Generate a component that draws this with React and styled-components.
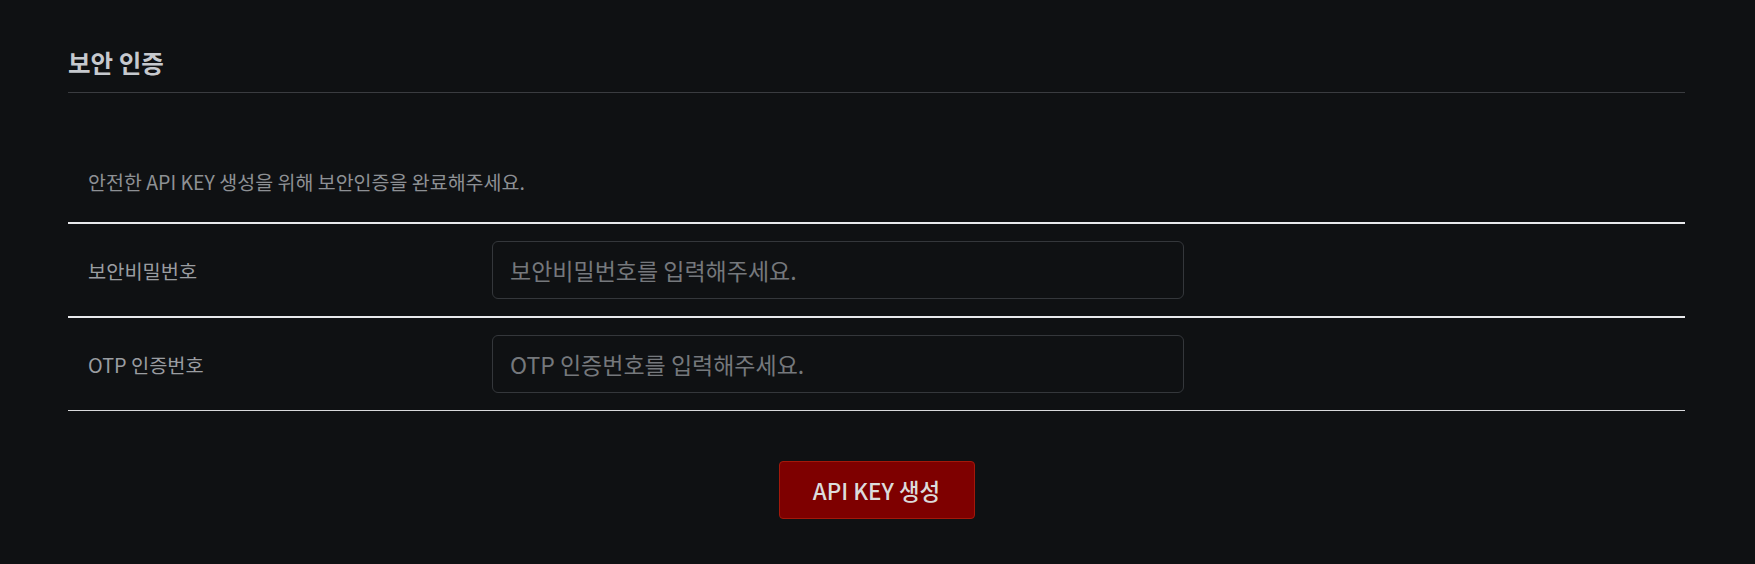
import React from "react";
import styled, { createGlobalStyle } from "styled-components";

const GlobalStyle = createGlobalStyle`
  body {
    margin: 0;
    background: #0f1113;
    font-family: "Noto Sans CJK KR", "Noto Sans", sans-serif;
  }
`;

const Page = styled.div`
  box-sizing: border-box;
  height: 564px;
  padding: 47px 70px 0 68px;
  background: #0f1113;
  overflow: hidden;
`;

const Title = styled.h2`
  margin: 0;
  font-size: 24.5px;
  line-height: 32px;
  font-weight: 700;
  color: #c6c9ce;
  padding-bottom: 13px;
  border-bottom: 1px solid #3a3c40;
`;

const Description = styled.p`
  margin: 77px 0 28px;
  padding-left: 20px;
  font-size: 19.5px;
  line-height: 24px;
  color: #8d9094;
`;

const Table = styled.div`
  border-bottom: 1px solid #d9dadc;
`;

const Row = styled.div`
  display: grid;
  grid-template-columns: 404px 692px;
  align-items: center;
  padding: 17px 20px 17px;
  border-top: 2px solid #e8e9ec;
`;

const Label = styled.label`
  font-size: 19.8px;
  color: #9a9da1;
`;

const Input = styled.input`
  box-sizing: border-box;
  width: 100%;
  height: 58px;
  padding: 0 17px;
  background: transparent;
  border: 1px solid #34373b;
  border-radius: 6px;
  font-family: inherit;
  font-size: 23px;
  color: #c6c9ce;
  outline: none;

  &::placeholder {
    color: #75787c;
  }
`;

const Actions = styled.div`
  display: flex;
  justify-content: center;
  margin-top: 50px;
`;

const SubmitButton = styled.button`
  width: 196px;
  height: 58px;
  padding: 0;
  background: #7e0000;
  border: 1px solid #a3180a;
  border-radius: 4px;
  color: #dcdcdc;
  font-family: inherit;
  font-size: 22.4px;
  font-weight: 500;
  cursor: pointer;
`;

const fields = [
  { label: "보안비밀번호", placeholder: "보안비밀번호를 입력해주세요.", type: "password" },
  { label: "OTP 인증번호", placeholder: "OTP 인증번호를 입력해주세요.", type: "text" },
];

const App = () => {
  return (
    <>
      <GlobalStyle />
      <Page>
        <Title>보안 인증</Title>
        <Description>안전한 API KEY 생성을 위해 보안인증을 완료해주세요.</Description>
        <Table>
          {fields.map((f) => (
            <Row key={f.label}>
              <Label>{f.label}</Label>
              <Input type={f.type} placeholder={f.placeholder} />
            </Row>
          ))}
        </Table>
        <Actions>
          <SubmitButton>API KEY 생성</SubmitButton>
        </Actions>
      </Page>
    </>
  );
};

export default App;
